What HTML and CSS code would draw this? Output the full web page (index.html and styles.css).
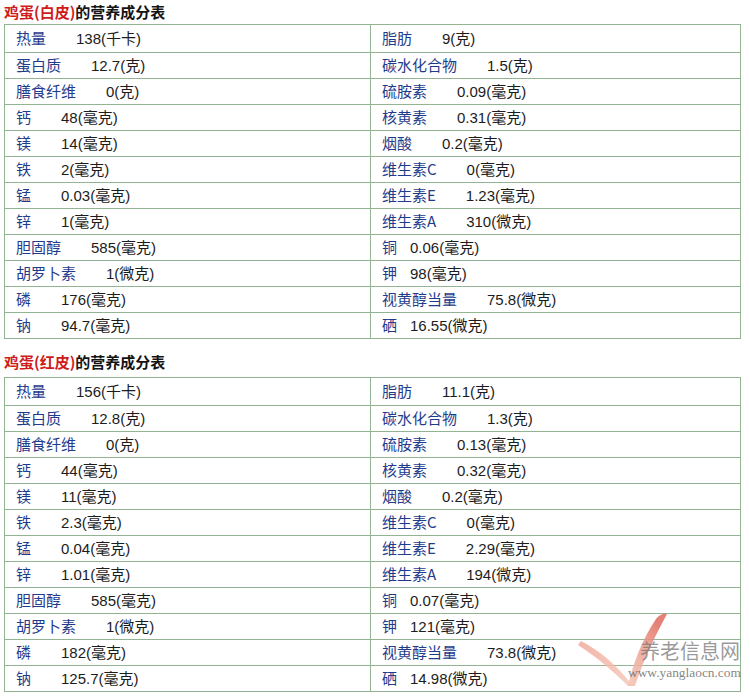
FILE: index.html
```html
<!DOCTYPE html>
<html lang="zh-CN">
<head>
<meta charset="utf-8">
<title>鸡蛋的营养成分表</title>
<link rel="stylesheet" href="styles.css">
</head>
<body>
<div class="page">
  <section class="section">
    <h2 class="title"><span class="hl">鸡蛋(白皮)</span>的营养成分表</h2>
    <table class="nt">
      <tr><td><span class="k">热量</span><span class="v">138(千卡)</span></td><td><span class="k">脂肪</span><span class="v">9(克)</span></td></tr>
      <tr><td><span class="k">蛋白质</span><span class="v">12.7(克)</span></td><td><span class="k">碳水化合物</span><span class="v">1.5(克)</span></td></tr>
      <tr><td><span class="k">膳食纤维</span><span class="v">0(克)</span></td><td><span class="k">硫胺素</span><span class="v">0.09(毫克)</span></td></tr>
      <tr><td><span class="k">钙</span><span class="v">48(毫克)</span></td><td><span class="k">核黄素</span><span class="v">0.31(毫克)</span></td></tr>
      <tr><td><span class="k">镁</span><span class="v">14(毫克)</span></td><td><span class="k">烟酸</span><span class="v">0.2(毫克)</span></td></tr>
      <tr><td><span class="k">铁</span><span class="v">2(毫克)</span></td><td><span class="k">维生素C</span><span class="v">0(毫克)</span></td></tr>
      <tr><td><span class="k">锰</span><span class="v">0.03(毫克)</span></td><td><span class="k">维生素E</span><span class="v">1.23(毫克)</span></td></tr>
      <tr><td><span class="k">锌</span><span class="v">1(毫克)</span></td><td><span class="k">维生素A</span><span class="v">310(微克)</span></td></tr>
      <tr><td><span class="k">胆固醇</span><span class="v">585(毫克)</span></td><td><span class="k short">铜</span><span class="v">0.06(毫克)</span></td></tr>
      <tr><td><span class="k">胡罗卜素</span><span class="v">1(微克)</span></td><td><span class="k short">钾</span><span class="v">98(毫克)</span></td></tr>
      <tr><td><span class="k">磷</span><span class="v">176(毫克)</span></td><td><span class="k">视黄醇当量</span><span class="v">75.8(微克)</span></td></tr>
      <tr><td><span class="k">钠</span><span class="v">94.7(毫克)</span></td><td><span class="k short">硒</span><span class="v">16.55(微克)</span></td></tr>
    </table>
  </section>
  <section class="section">
    <h2 class="title"><span class="hl">鸡蛋(红皮)</span>的营养成分表</h2>
    <table class="nt">
      <tr><td><span class="k">热量</span><span class="v">156(千卡)</span></td><td><span class="k">脂肪</span><span class="v">11.1(克)</span></td></tr>
      <tr><td><span class="k">蛋白质</span><span class="v">12.8(克)</span></td><td><span class="k">碳水化合物</span><span class="v">1.3(克)</span></td></tr>
      <tr><td><span class="k">膳食纤维</span><span class="v">0(克)</span></td><td><span class="k">硫胺素</span><span class="v">0.13(毫克)</span></td></tr>
      <tr><td><span class="k">钙</span><span class="v">44(毫克)</span></td><td><span class="k">核黄素</span><span class="v">0.32(毫克)</span></td></tr>
      <tr><td><span class="k">镁</span><span class="v">11(毫克)</span></td><td><span class="k">烟酸</span><span class="v">0.2(毫克)</span></td></tr>
      <tr><td><span class="k">铁</span><span class="v">2.3(毫克)</span></td><td><span class="k">维生素C</span><span class="v">0(毫克)</span></td></tr>
      <tr><td><span class="k">锰</span><span class="v">0.04(毫克)</span></td><td><span class="k">维生素E</span><span class="v">2.29(毫克)</span></td></tr>
      <tr><td><span class="k">锌</span><span class="v">1.01(毫克)</span></td><td><span class="k">维生素A</span><span class="v">194(微克)</span></td></tr>
      <tr><td><span class="k">胆固醇</span><span class="v">585(毫克)</span></td><td><span class="k short">铜</span><span class="v">0.07(毫克)</span></td></tr>
      <tr><td><span class="k">胡罗卜素</span><span class="v">1(微克)</span></td><td><span class="k short">钾</span><span class="v">121(毫克)</span></td></tr>
      <tr><td><span class="k">磷</span><span class="v">182(毫克)</span></td><td><span class="k">视黄醇当量</span><span class="v">73.8(微克)</span></td></tr>
      <tr><td><span class="k">钠</span><span class="v">125.7(毫克)</span></td><td><span class="k short">硒</span><span class="v">14.98(微克)</span></td></tr>
    </table>
  </section>
  <div class="watermark" aria-hidden="true">
    <svg class="wm-mark" width="100" height="90" viewBox="0 0 100 90">
      <defs>
        <linearGradient id="wg" x1="0" y1="1" x2="0.5" y2="0">
          <stop offset="0" stop-color="#f4c4b4"/>
          <stop offset="0.6" stop-color="#ec9d8e"/>
          <stop offset="1" stop-color="#e06a5e"/>
        </linearGradient>
        <linearGradient id="wg2" x1="0" y1="0" x2="1" y2="1">
          <stop offset="0" stop-color="#f1a99a"/>
          <stop offset="1" stop-color="#f5c9bb"/>
        </linearGradient>
      </defs>
      <path d="M6,36 C24,45 42,60 58,81 L53,81 C36,64 20,51 3,40 Z" fill="url(#wg2)" opacity="0.85"/>
      <path d="M53,81 C58,58 68,33 81,14 C84,10 88,8 92,9 C80,31 68,56 60,81 Z" fill="url(#wg)" opacity="0.85"/>
    </svg>
    <div class="wm-name">养老信息网</div>
    <div class="wm-url">www.yanglaocn.com</div>
  </div>
</div>
</body>
</html>
```
FILE: styles.css
```css
html, body {
  margin: 0;
  padding: 0;
  background: #ffffff;
}
body {
  font-family: "Liberation Sans", "Noto Sans CJK SC", sans-serif;
  font-size: 15px;
  color: #1f1f1f;
}
.page {
  position: relative;
  width: 750px;
  height: 698px;
  overflow: hidden;
}
.section + .section {
  margin-top: 12px;
}
.title {
  margin: 0;
  padding-left: 4px;
  height: 24px;
  line-height: 23px;
  font-size: 15px;
  font-weight: bold;
  color: #141414;
  font-family: "Noto Sans CJK SC", sans-serif;
}
.section + .section .title {
  height: 26px;
  line-height: 22px;
}
.title .hl {
  color: #cf1b1b;
}
.nt {
  margin-left: 4px;
  width: 737px;
  border-collapse: collapse;
  table-layout: fixed;
}
.nt td {
  border: 1px solid #93b493;
  height: 25px;
  padding: 0 0 0 11px;
  line-height: 20px;
  white-space: nowrap;
  vertical-align: middle;
}
.nt tr:first-child td {
  height: 27px;
}
.nt td:first-child {
  width: 354px;
}
.k {
  color: #1f3b8c;
  font-family: "Noto Sans CJK SC", sans-serif;
  margin-right: 30px;
}
.k.short {
  margin-right: 13px;
}
.v {
  color: #1c1c1c;
}
.watermark {
  position: absolute;
  left: 575px;
  top: 605px;
  width: 175px;
  height: 90px;
  pointer-events: none;
}
.wm-mark {
  position: absolute;
  left: 0;
  top: 0;
}
.wm-name {
  position: absolute;
  left: 65px;
  top: 36px;
  font-family: "Noto Sans CJK SC", sans-serif;
  font-size: 20px;
  line-height: 20px;
  color: rgba(120, 120, 120, 0.75);
}
.wm-url {
  position: absolute;
  left: 53px;
  top: 61px;
  white-space: nowrap;
  font-family: "Liberation Serif", "DejaVu Serif", serif;
  font-size: 13.4px;
  line-height: 14px;
  color: rgba(100, 100, 100, 0.8);
}
```
